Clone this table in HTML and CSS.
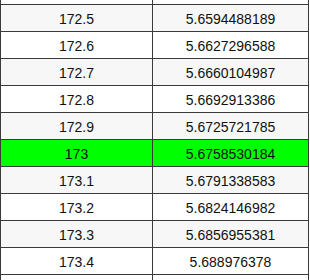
FILE: index.html
```html
<!DOCTYPE html>
<html>
<head>
<meta charset="utf-8">
<link rel="stylesheet" href="styles.css">
</head>
<body>
<div class="table">
  <div class="row edge-top"><div class="cell"></div><div class="cell"></div></div>
  <div class="row alt"><div class="cell">172.5</div><div class="cell">5.6594488189</div></div>
  <div class="row"><div class="cell">172.6</div><div class="cell">5.6627296588</div></div>
  <div class="row alt"><div class="cell">172.7</div><div class="cell">5.6660104987</div></div>
  <div class="row"><div class="cell">172.8</div><div class="cell">5.6692913386</div></div>
  <div class="row alt"><div class="cell">172.9</div><div class="cell">5.6725721785</div></div>
  <div class="row hl"><div class="cell">173</div><div class="cell">5.6758530184</div></div>
  <div class="row alt"><div class="cell">173.1</div><div class="cell">5.6791338583</div></div>
  <div class="row"><div class="cell">173.2</div><div class="cell">5.6824146982</div></div>
  <div class="row alt"><div class="cell">173.3</div><div class="cell">5.6856955381</div></div>
  <div class="row"><div class="cell">173.4</div><div class="cell">5.688976378</div></div>
  <div class="row edge-bottom"><div class="cell"></div><div class="cell"></div></div>
</div>
</body>
</html>
```
FILE: styles.css
```css
html, body {
  margin: 0;
  padding: 0;
  background: #fff;
  overflow: hidden;
}
.table {
  width: 309px;
  font-family: "Liberation Sans", Arial, sans-serif;
  font-size: 14px;
  color: #111;
}
.row {
  display: grid;
  grid-template-columns: 151px 156px;
  height: 27px;
  box-sizing: border-box;
  border-top: 1px solid #3a3a3a;
  border-left: 1px solid #3a3a3a;
  border-right: 1px solid #3a3a3a;
  background: #fff;
}
.row.edge-top {
  height: 4px;
  border-top: 0;
}
.row.edge-bottom {
  height: 6px;
}
.row.alt {
  background: #f7f7f7;
}
.row.hl {
  background: #00ff00;
}
.cell {
  display: flex;
  align-items: center;
  justify-content: center;
  line-height: 16px;
  padding-top: 1px;
}
.cell + .cell {
  border-left: 1px solid #3a3a3a;
}
```
